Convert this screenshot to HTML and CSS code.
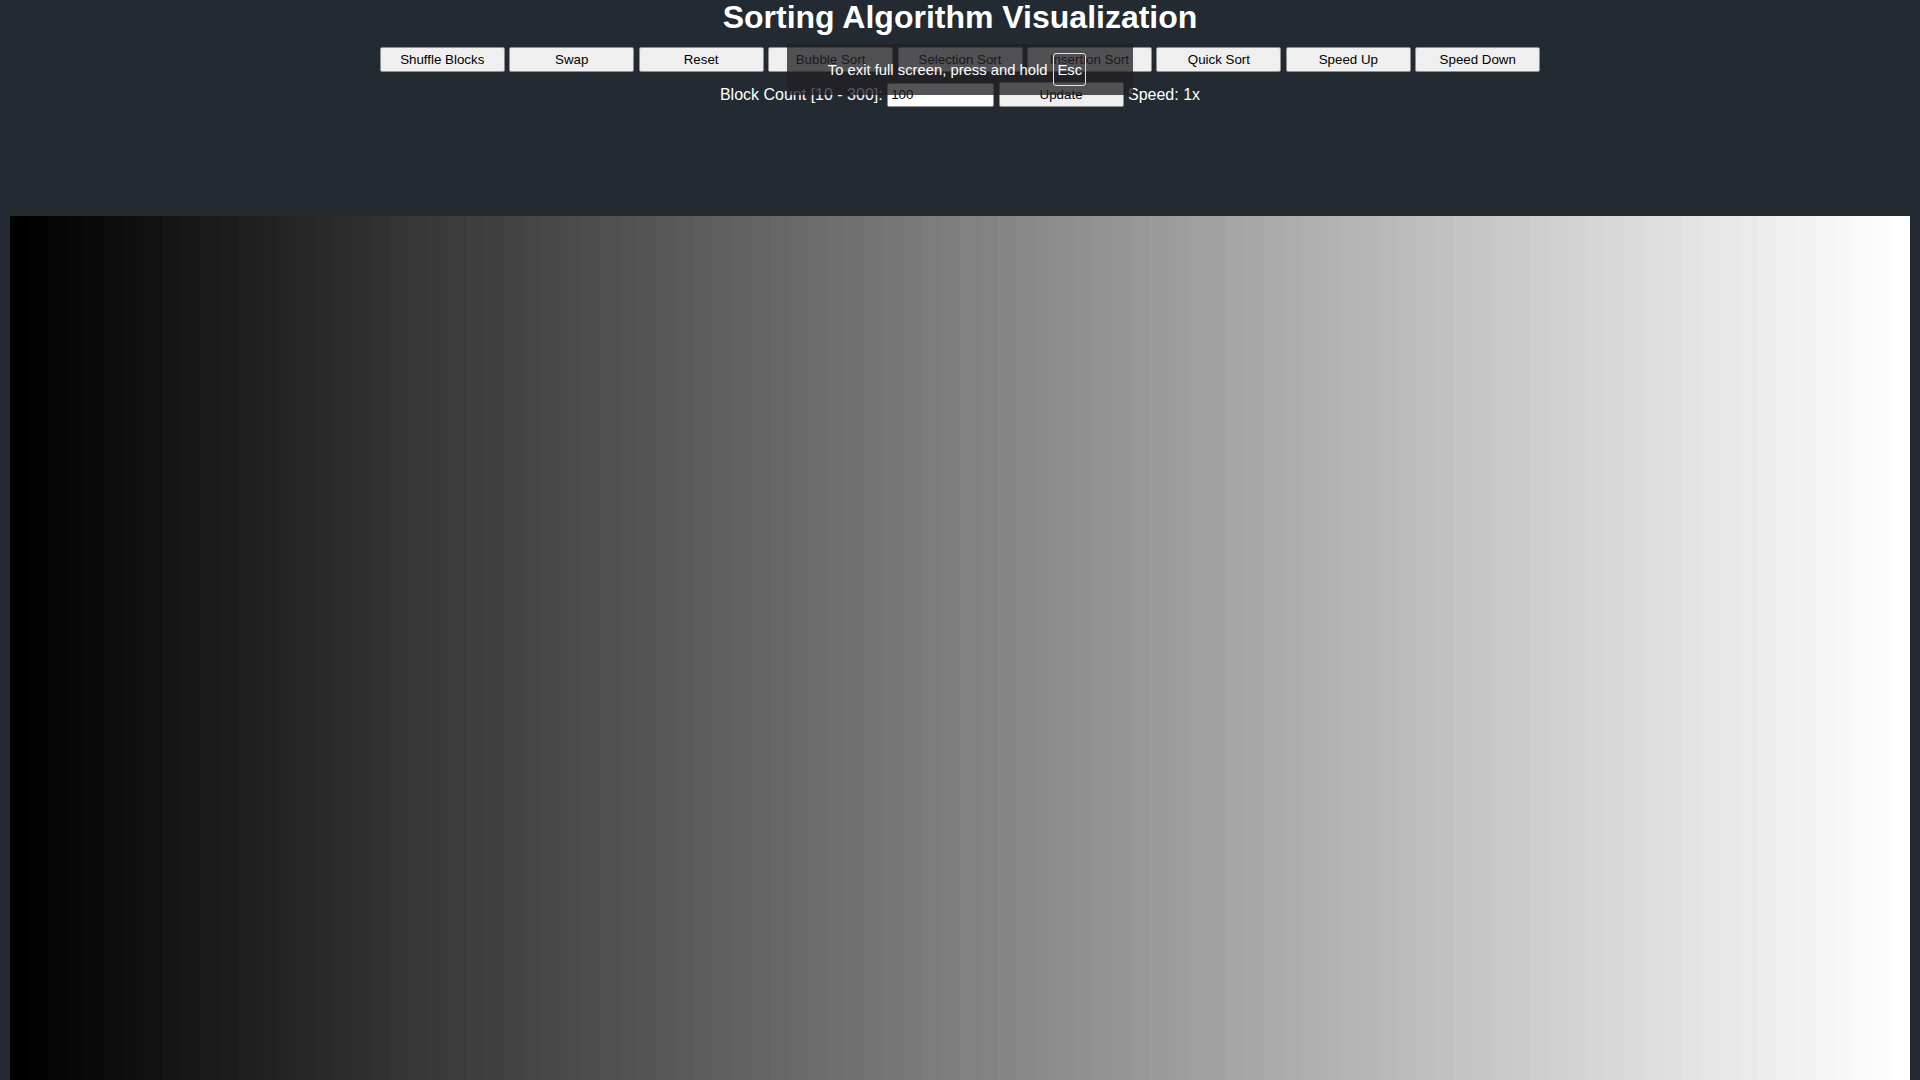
FILE: index.html
```html
<!DOCTYPE html>
<html lang="en">
<head>
<meta charset="utf-8">
<title>Sorting Algorithm Visualization</title>
<link rel="stylesheet" href="styles.css">
</head>
<body>
  <header class="header">
    <h1 class="title">Sorting Algorithm Visualization</h1>
    <div class="controls">
      <button class="btn">Shuffle Blocks</button>
      <button class="btn">Swap</button>
      <button class="btn">Reset</button>
      <button class="btn">Bubble Sort</button>
      <button class="btn">Selection Sort</button>
      <button class="btn">Insertion Sort</button>
      <button class="btn">Quick Sort</button>
      <button class="btn">Speed Up</button>
      <button class="btn">Speed Down</button>
    </div>
    <div class="settings">
      <label class="label" for="count">Block Count [10 - 300]:</label>
      <input class="count-input" id="count" type="text" value="100">
      <button class="btn">Update</button>
      <span class="label">Speed: 1x</span>
    </div>
  </header>
  <main class="canvas" id="canvas"></main>
  <div class="fs-bubble">
    <span class="fs-text">To exit full screen, press and hold</span>
    <span class="fs-key">Esc</span>
  </div>
  <script src="script.js"></script>
</body>
</html>
```
FILE: styles.css
```css
html, body {
  margin: 0;
  padding: 0;
}
body {
  background: #232a32;
  font-family: "Liberation Sans", Arial, sans-serif;
  font-size: 16px;
  color: #ffffff;
  overflow: hidden;
}
.header {
  display: flex;
  flex-direction: column;
  align-items: center;
}
.title {
  margin: 0;
  font-size: 32px;
  line-height: 34px;
  font-weight: bold;
  color: #ffffff;
}
.controls {
  margin-top: 13px;
  display: flex;
  gap: 4.45px;
  justify-content: center;
}
.btn {
  box-sizing: border-box;
  width: 125px;
  height: 25px;
  padding: 0;
  font-family: "Liberation Sans", Arial, sans-serif;
  font-size: 13.333px;
  color: #000000;
  background: #efefef;
  border: 1px solid #8f8f8f;
  border-radius: 2px;
}
.settings {
  margin-top: 10px;
  display: flex;
  align-items: center;
  gap: 4.45px;
  height: 25px;
}
.label {
  color: #ffffff;
  font-size: 16px;
}
.count-input {
  box-sizing: border-box;
  width: 107px;
  height: 24px;
  padding: 0 3px;
  font-family: "Liberation Sans", Arial, sans-serif;
  font-size: 13.333px;
  color: #000000;
  background: #ffffff;
  border: 1px solid #8f8f8f;
  border-radius: 2px;
}
.canvas {
  margin: 109px 10px 0 10px;
  height: 900px;
  display: flex;
}
.block {
  width: 19px;
  height: 100%;
  flex: none;
}
.fs-bubble {
  position: absolute;
  left: 787px;
  top: 44px;
  width: 346px;
  height: 51px;
  box-sizing: border-box;
  background: rgba(32, 33, 36, 0.77);
  display: flex;
  align-items: center;
  justify-content: center;
  gap: 6px;
  font-family: "Liberation Sans", Arial, sans-serif;
  font-size: 14.8px;
  color: #ffffff;
}
.fs-text {
  margin-left: -6px;
}
.fs-key {
  box-sizing: border-box;
  height: 33px;
  padding: 0 3px;
  display: flex;
  align-items: center;
  border: 1px solid #e0e0e0;
  border-radius: 3px;
}
```
FILE: script.js
```js
(function () {
  var canvas = document.getElementById('canvas');
  var n = 100;
  for (var i = 0; i < n; i++) {
    var b = document.createElement('div');
    b.className = 'block';
    var g = Math.round(255 * i / (n - 1));
    b.style.backgroundColor = 'rgb(' + g + ',' + g + ',' + g + ')';
    canvas.appendChild(b);
  }
})();
```
